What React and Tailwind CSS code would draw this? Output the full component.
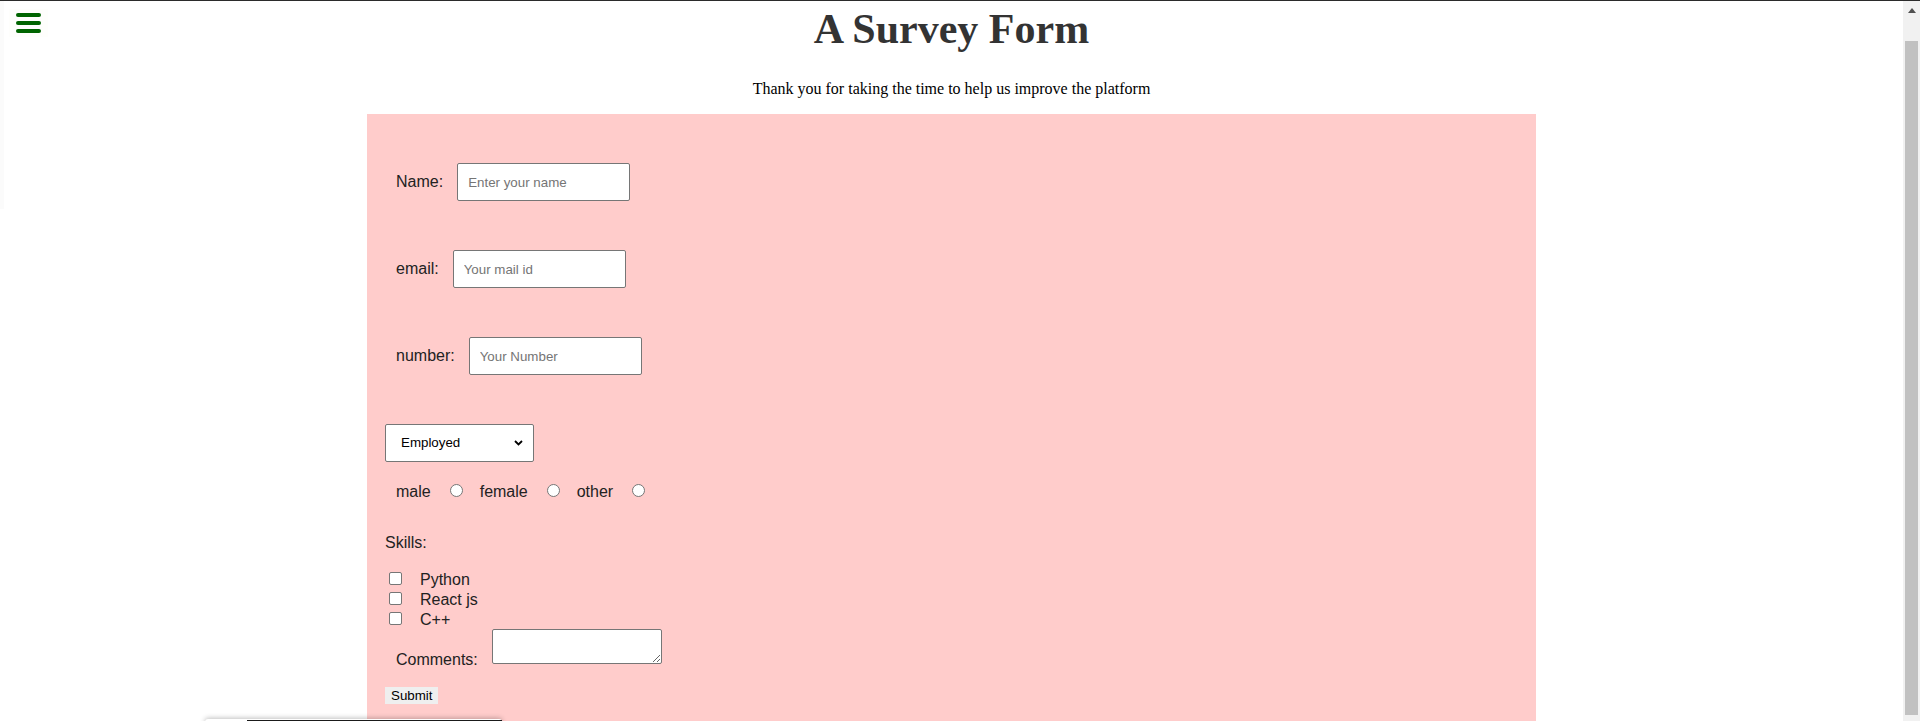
import { useState } from 'react'

const sans = "font-['Liberation_Sans',Arial,sans-serif]"
const serif = "font-['Liberation_Serif','Times_New_Roman',serif]"

const TextRow = ({ label, placeholder, type = 'text' }) => (
  <div className="flex items-center pl-[11px]">
    <label className="text-[16px] leading-[18px] text-[#222]">{label}</label>
    <input
      type={type}
      placeholder={placeholder}
      className="ml-[14px] w-[173px] h-[38px] border border-[#767676] rounded-[2px] bg-white pl-[10px] text-[13.33px] text-black placeholder:text-[#757575] outline-none"
    />
  </div>
)

const Radio = ({ label, name }) => (
  <div className="flex items-center">
    <span className="text-[16px] leading-[18px] text-[#222]">{label}</span>
    <input
      type="radio"
      name={name}
      className="appearance-none ml-[19px] mr-[17px] w-[13px] h-[13px] rounded-full border border-[#767676] bg-white mt-[-4px]"
    />
  </div>
)

const Skill = ({ label }) => (
  <div className="flex items-center h-[20px]">
    <input
      type="checkbox"
      className="appearance-none ml-[4px] mt-[-3px] w-[13px] h-[13px] rounded-[2px] border border-[#767676] bg-white"
    />
    <span className="ml-[18px] text-[16px] leading-[20px] text-[#222]">{label}</span>
  </div>
)

export default function App() {
  const [status, setStatus] = useState('Employed')

  return (
    <div className={`relative flex h-[721px] overflow-hidden border-t border-[#2b2b2b] bg-white ${sans}`}>
      {/* faint side drawer edge */}
      <div className="absolute left-0 top-0 w-[4px] h-[208px] bg-[#fbfbfb]" />

      {/* menu button */}
      <button className="absolute left-[9px] top-[8px] w-[39px] h-[28px] flex flex-col items-center justify-center gap-[4px] bg-[#fefefc]">
        <span className="block w-[25px] h-[4px] rounded-full bg-[#006400]" />
        <span className="block w-[25px] h-[4px] rounded-full bg-[#006400]" />
        <span className="block w-[25px] h-[4px] rounded-full bg-[#006400]" />
      </button>

      <main className="flex-1 flex flex-col items-center">
        <h1 className={`mt-[4px] text-[42px] leading-[48px] font-bold text-[#333] ${serif}`}>A Survey Form</h1>
        <p className={`mt-[26px] text-[16px] leading-[20px] text-black ${serif}`}>
          Thank you for taking the time to help us improve the platform
        </p>

        <form className="mt-[15px] w-[1169px] bg-[#ffcccb] pl-[18px] pt-[49px] pb-[60px]">
          <div className="flex flex-col gap-[49px]">
            <TextRow label="Name:" placeholder="Enter your name" />
            <TextRow label="email:" placeholder="Your mail id" type="email" />
            <TextRow label="number:" placeholder="Your Number" />
            <div className="relative w-[149px]">
              <select
                value={status}
                onChange={(e) => setStatus(e.target.value)}
                className="appearance-none w-[149px] h-[38px] border border-[#767676] rounded-[2px] bg-white pl-[15px] text-[13.33px] text-black outline-none"
              >
                <option>Employed</option>
                <option>Student</option>
                <option>Unemployed</option>
              </select>
              <svg className="absolute right-[11px] top-[16px] pointer-events-none" width="9" height="6" viewBox="0 0 9 6">
                <path d="M1 1l3.5 3.5L8 1" fill="none" stroke="#000" strokeWidth="1.8" />
              </svg>
            </div>
          </div>

          <div className="mt-[21px] flex items-center h-[18px] pl-[11px]">
            <Radio label="male" name="gender" />
            <Radio label="female" name="gender" />
            <Radio label="other" name="gender" />
          </div>

          <p className="mt-[33px] text-[16px] leading-[18px] text-[#222]">Skills:</p>

          <div className="mt-[18px] flex flex-col">
            <Skill label="Python" />
            <Skill label="React js" />
            <Skill label="C++" />
          </div>

          <div className="flex items-start pl-[11px] mt-[-1px]">
            <label className="mt-[22px] text-[16px] leading-[18px] text-[#222]">Comments:</label>
            <textarea className="ml-[14px] w-[170px] h-[35px] border border-[#767676] rounded-[2px] bg-white outline-none" />
          </div>

          <button type="button" className="mt-[18px] block h-[17px] px-[6px] bg-[#efefef] text-[13.33px] leading-[15px] text-black">
            Submit
          </button>

          <div className="h-[200px]" />
        </form>
      </main>

      {/* scrollbar */}
      <div className="w-[17px] bg-[#f1f1f1] flex flex-col items-center">
        <svg className="mt-[7px]" width="8" height="5" viewBox="0 0 8 5">
          <path d="M0 5L4 0l4 5z" fill="#505050" />
        </svg>
        <div className="mt-[28px] w-[13px] h-[674px] bg-[#c1c1c1]" />
      </div>

      {/* widget peeking from below */}
      <div className="absolute left-[205px] top-[718px] w-[297px] h-[40px] bg-white rounded-t-[3px] shadow-[0_-1px_5px_rgba(0,0,0,0.25)]">
        <div className="ml-[42px] mt-[1px] h-[4px] bg-[#1a1a1a]" />
      </div>
    </div>
  )
}
